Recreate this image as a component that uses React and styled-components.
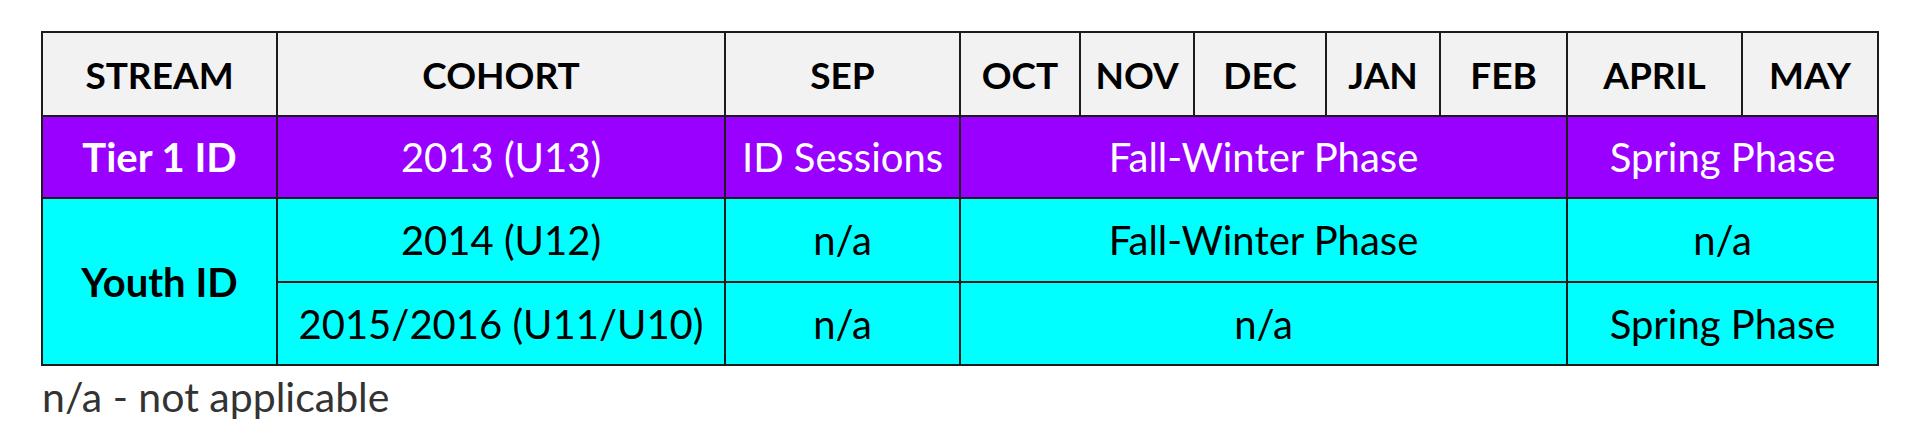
import React from "react";
import styled, { createGlobalStyle } from "styled-components";

const GlobalStyle = createGlobalStyle`
  body {
    margin: 0;
    background: #ffffff;
    font-family: Lato, "Open Sans", sans-serif;
  }
`;

const COLUMNS = [235, 448, 235, 120, 114, 132, 114, 127, 175, 136];
const MONTHS = ["SEP", "OCT", "NOV", "DEC", "JAN", "FEB", "APRIL", "MAY"];

const ROW_COLORS = {
  head: { bg: "#f2f2f2", fg: "#000000" },
  tier: { bg: "#9900ff", fg: "#ffffff" },
  youth: { bg: "#00ffff", fg: "#000000" },
};

export default function App() {
  return (
    <Page>
      <GlobalStyle />
      <Schedule>
        <colgroup>
          {COLUMNS.map((w, i) => (
            <col key={i} style={{ width: w }} />
          ))}
        </colgroup>
        <thead>
          <Row $h={84} $tone="head">
            <HeadCell>STREAM</HeadCell>
            <HeadCell>COHORT</HeadCell>
            {MONTHS.map((m) => (
              <HeadCell key={m}>{m}</HeadCell>
            ))}
          </Row>
        </thead>
        <tbody>
          <Row $h={82} $tone="tier">
            <Cell $bold>Tier 1 ID</Cell>
            <Cell>2013 (U13)</Cell>
            <Cell>ID Sessions</Cell>
            <Cell colSpan={5}>Fall-Winter Phase</Cell>
            <Cell colSpan={2}>Spring Phase</Cell>
          </Row>
          <Row $h={84} $tone="youth">
            <Cell $bold rowSpan={2}>
              Youth ID
            </Cell>
            <Cell>2014 (U12)</Cell>
            <Cell>n/a</Cell>
            <Cell colSpan={5}>Fall-Winter Phase</Cell>
            <Cell colSpan={2}>n/a</Cell>
          </Row>
          <Row $h={83} $tone="youth">
            <Cell>2015/2016 (U11/U10)</Cell>
            <Cell>n/a</Cell>
            <Cell colSpan={5}>n/a</Cell>
            <Cell colSpan={2}>Spring Phase</Cell>
          </Row>
        </tbody>
      </Schedule>
      <Note>n/a - not applicable</Note>
    </Page>
  );
}

const Page = styled.main`
  padding: 31px 0 0 41px;
`;

const Schedule = styled.table`
  border-collapse: collapse;
  table-layout: fixed;
  width: 1838px;
  border: 2px solid #1c1c1c;
`;

const Row = styled.tr`
  height: ${(p) => p.$h}px;
  background: ${(p) => ROW_COLORS[p.$tone].bg};
  color: ${(p) => ROW_COLORS[p.$tone].fg};
`;

const HeadCell = styled.th`
  border: 2px solid #1c1c1c;
  padding: 0;
  font-size: 37px;
  font-weight: 700;
  text-align: center;
  vertical-align: middle;
`;

const Cell = styled.td`
  border: 2px solid #1c1c1c;
  padding: 0;
  font-size: 40px;
  font-weight: ${(p) => (p.$bold ? 700 : 400)};
  text-align: center;
  vertical-align: middle;
  white-space: nowrap;
`;

const Note = styled.p`
  margin: 8px 0 0 1px;
  font-size: 41px;
  line-height: 46px;
  color: #333333;
`;
